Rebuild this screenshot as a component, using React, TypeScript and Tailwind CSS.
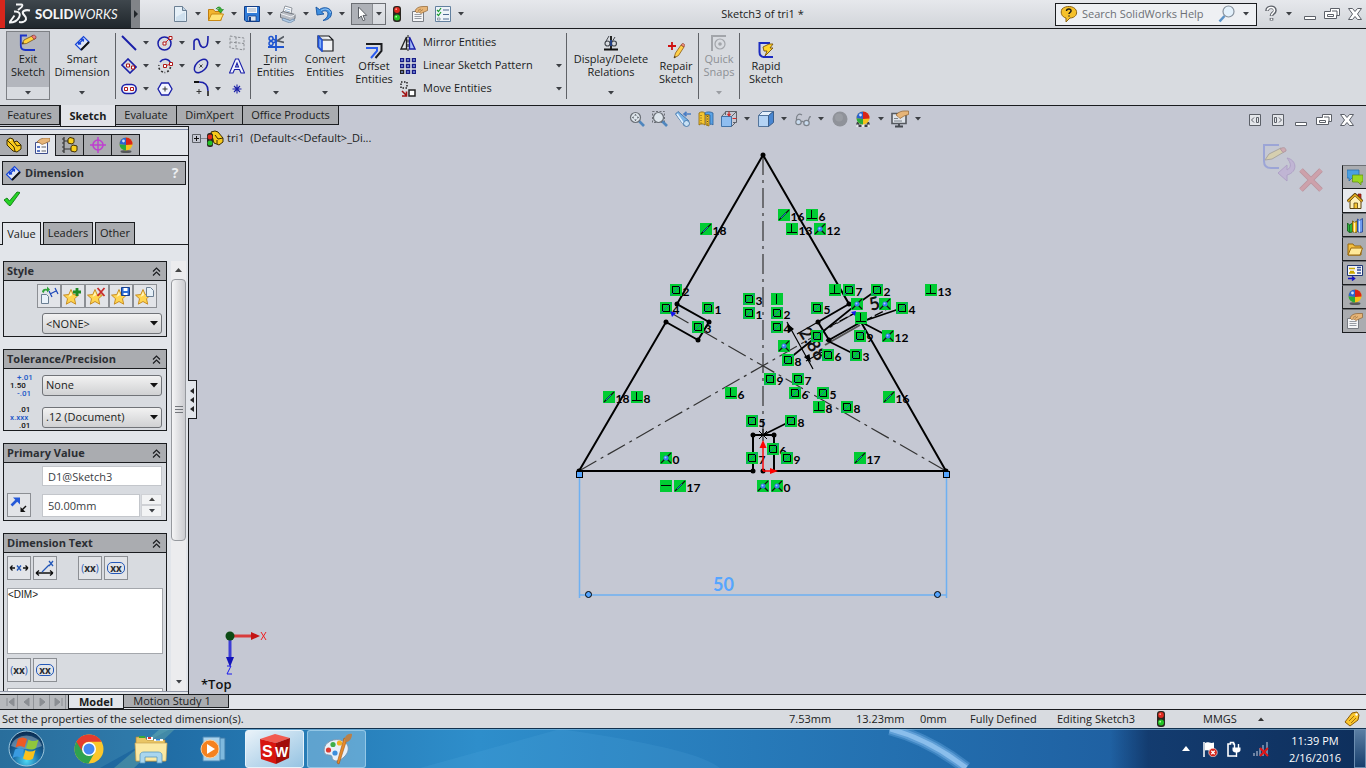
import type { ReactNode } from 'react';

const outline = '#1a1fa8';

function Icon({ size = 16, box = 16, children }: { size?: number; box?: number; children: ReactNode }) {
  return (
    <svg width={size} height={size} viewBox={`0 0 ${box} ${box}`} fill="none" className="shrink-0" aria-hidden="true">
      {children}
    </svg>
  );
}

function Caret({ color = '#3c3f44' }: { color?: string }) {
  return (
    <svg width="6" height="4" viewBox="0 0 6 4" className="shrink-0" aria-hidden="true">
      <path d="M0 0h6L3 3.500z" fill={color} />
    </svg>
  );
}

function DropArrow({ label, className = 'w-[18px]' }: { label: string; className?: string }) {
  return (
    <button type="button" aria-label={label} className={`${className} flex h-5 shrink-0 items-center justify-center`}>
      <Caret />
    </button>
  );
}

/* ---------- Icons ---------- */

const NewDoc = () => (
  <Icon size={18} box={18}>
    <path d="M3.500 1.500h8l4 4v11h-12z" fill="#e6f0f8" stroke="#6b7f93" />
    <path d="M11.500 1.500v4h4" fill="#c1d4e4" stroke="#6b7f93" />
    <path d="M5 12l9-5v9H5z" fill="#bfd6e8" opacity=".6" />
  </Icon>
);

const OpenDoc = () => (
  <Icon size={18} box={18}>
    <path d="M1.500 4.500h5l1.500 2h6v9h-12.500z" fill="#f2b52e" stroke="#c07c10" />
    <path d="M1.500 15.500l3-6.500h12l-3 6.500z" fill="#ffe375" stroke="#c98a14" />
    <path d="M9 4c2-3 5-2.500 5.500 0.500h2L13.500 8l-3-3.500h2C12 2.500 11 2.500 9 4z" fill="#38b432" stroke="#167d17" strokeWidth=".6" />
  </Icon>
);

const SaveDoc = () => (
  <Icon>
    <path d="M.500.500h15v15H2L.500 14z" fill="#2f7bd8" stroke="#123d86" />
    <path d="M3 1h10v6H3z" fill="#f4f7fb" />
    <path d="M4 3h8M4 5h8" stroke="#9dabbc" />
    <path d="M4 10h8v5H4z" fill="#dde5ef" stroke="#123d86" strokeWidth=".7" />
    <path d="M6 11v4" stroke="#123d86" strokeWidth="2" />
  </Icon>
);

const PrintDoc = () => (
  <Icon size={18} box={18}>
    <path d="M4 7l2-6 7 2-1 6z" fill="#fff" stroke="#8f959d" />
    <path d="M6.500 3.500l5 1.500M6 5.500l5 1.500" stroke="#8aa8c8" strokeWidth=".8" />
    <path d="M1.500 8l3-1.500 11.500 3v4l-4 2.500-10.500-3.500z" fill="#b9bdc4" stroke="#6f747c" />
    <path d="M1.500 8.500l10.500 3.500 4-2.500" stroke="#eef0f3" />
    <path d="M4 13l7 2.500 3-1.500 2 1-5 3-8-3z" fill="#aecbe8" stroke="#6d87a3" strokeWidth=".7" />
  </Icon>
);

const UndoIcon = () => (
  <Icon size={18} box={18}>
    <path d="M1 2l1 8 7-1-2.500-2C9 5 13 5.500 13 9c0 3-2.500 5-5 6.500 5-.5 8.500-3 8.500-7.500C16.500 3 9 1 4.500 4.500z" fill="#3f8fe0" stroke="#17549f" strokeWidth=".9" />
    <path d="M6 5.500C10 2.500 15 4.500 15.500 8" stroke="#a9d4fa" strokeWidth=".8" />
  </Icon>
);

const Pointer = () => (
  <Icon>
    <path d="M4.500 1v11.500l2.700-2.500 1.900 4.700 1.900-.8-2-4.500h3.700z" fill="#fff" stroke="#5d6167" />
  </Icon>
);

const TrafficLight = () => (
  <Icon size={16}>
    <rect x="4" y="0" width="8" height="16" rx="3" fill="#2a2620" />
    <circle cx="8" cy="4" r="2.900" fill="#e0291f" />
    <circle cx="8" cy="11.500" r="3" fill="#23c326" />
    <circle cx="7.200" cy="3.200" r=".9" fill="#ff9d90" />
    <circle cx="7.200" cy="10.700" r=".9" fill="#b0ffa5" />
  </Icon>
);

const PropsHand = () => (
  <Icon>
    <path d="M.500 5.500h11v10h-11z" fill="#f4f5f7" stroke="#787c83" />
    <path d="M2.500 8.500h7M2.500 10.500h7M2.500 12.500h7" stroke="#969ba3" />
    <path d="M3 5c1-3 4-4.500 8-4.500h4.500v4L12 6l-3 1.500L7 6 4.500 6.500z" fill="#e7b578" stroke="#8f6330" strokeWidth=".7" />
    <path d="M6 4.500l3-1.500M8 5.500l3-2" stroke="#8f6330" strokeWidth=".6" />
  </Icon>
);

const OptionList = () => (
  <Icon>
    <path d="M.500.500h15v15H.500z" fill="#eef3f9" stroke="#62809f" />
    <path d="M2 4l1.500 1.500L6 2M2 8l1.500 1.500L6 6" stroke="#1e9b30" strokeWidth="1.200" />
    <path d="M2.500 12h2.500v2H2.500z" stroke="#7c8896" strokeWidth=".8" />
    <path d="M8 4h6M8 8.500h6M8 13h6" stroke="#4e6a92" strokeWidth="1.200" />
  </Icon>
);

const PencilSketch = ({ size = 18 }: { size?: number }) => (
  <Icon size={size} box={18}>
    <path d="M8 1.500H1.800v10c0 3 2 4.500 4.500 4.500H16" stroke="#1b33c9" strokeWidth="1.800" />
    <path d="M3 10l2-4 9-4.500 2.500 3-9 5z" fill="#ffd23c" stroke="#6b4310" strokeWidth=".7" />
    <path d="M12.500 2.200l2.500 3 2-1c.4-1.800-.8-3.200-2.500-3z" fill="#ee7d7d" stroke="#7b2525" strokeWidth=".6" />
    <path d="M3 10l1-2 1.200 1.200z" fill="#222" />
  </Icon>
);

const SmartDim = () => (
  <Icon>
    <path d="M1.500 9.500l8-8L15 7l-8 8z" fill="#dfe6f6" stroke="#1746d8" strokeWidth="1.200" />
    <path d="M4 9.500l5.500-5.500M9.500 4l-.2 2.600M9.500 4l-2.600.2M4.500 9l.2-2.600M4.500 9l2.600-.2" stroke="#1746d8" strokeWidth="1.400" />
    <path d="M7 15l8-8" stroke="#111" strokeWidth="2" />
  </Icon>
);

const LineTool = () => (
  <Icon>
    <path d="M1 1l14 14" stroke={outline} strokeWidth="2" />
  </Icon>
);
const CircleTool = () => (
  <Icon>
    <circle cx="7.500" cy="8.500" r="6.500" stroke={outline} strokeWidth="1.500" />
    <path d="M7.500 8.500L13 3" stroke="#c22" />
    <path d="M6 7h3v3H6zM12 1.500h3v3h-3z" fill="#fff" stroke="#b01717" />
  </Icon>
);
const SplineTool = () => (
  <Icon>
    <path d="M1 15V7c0-3 4-4 5-1 1 6 4 8 7.500 5C15 9.500 15 5 15 1" stroke={outline} strokeWidth="1.600" />
  </Icon>
);
const PlaneTool = () => (
  <Icon>
    <path d="M1 1l6 1 8 1v12l-6-1-8-1zM7 2v12M1 7l14 1.500" stroke="#8b8e93" strokeDasharray="2.500 1.500" />
  </Icon>
);
const RectTool = () => (
  <Icon>
    <path d="M1 7l6-6 8 8-6 6z" stroke={outline} strokeWidth="1.600" />
    <path d="M5.500 6h3v3h-3zM10.500 8h3v3h-3z" fill="#fff" stroke="#b01717" />
  </Icon>
);
const ArcTool = () => (
  <Icon>
    <path d="M3 4c3-4 9-4 11 2" stroke={outline} strokeWidth="1.600" />
    <path d="M13.500 9c-.5 3-3 5.500-6 5.500M6 14c-3-1-5-4-4-7" stroke="#333" strokeWidth="1.600" strokeDasharray="2 2" />
    <path d="M8 8l5.500-2" stroke="#c22" />
    <path d="M6.500 6.500h3v3h-3zM12.500 4.500h3v3h-3z" fill="#fff" stroke="#b01717" />
  </Icon>
);
const EllipseTool = () => (
  <Icon>
    <ellipse cx="8" cy="8" rx="8" ry="5" transform="rotate(-45 8 8)" stroke={outline} strokeWidth="1.500" />
    <path d="M6.500 6.500l3 3M9.500 6.500l-3 3" stroke="#333" strokeWidth=".9" />
  </Icon>
);
const TextTool = () => (
  <Icon>
    <path d="M.500 15L6.500 1h3l6 14h-3.500l-1.500-3.500h-5L4 15zM6.500 9h3L8 5z" fill="#f3f5ff" stroke={outline} strokeWidth="1.100" />
  </Icon>
);
const SlotTool = () => (
  <Icon>
    <rect x=".8" y="3.500" width="14.400" height="9" rx="4.500" fill="#f3f5ff" stroke={outline} strokeWidth="1.600" />
    <path d="M3.500 6.500h3v3h-3zM9.500 6.500h3v3h-3z" fill="#fff" stroke="#b01717" />
  </Icon>
);
const PolygonTool = () => (
  <Icon>
    <path d="M4.500 2h7L15 8l-3.500 6h-7L1 8z" fill="#f3f5ff" stroke={outline} strokeWidth="1.300" />
    <path d="M8 5.500v5M5.500 8h5" stroke="#333" />
  </Icon>
);
const FilletTool = () => (
  <Icon>
    <path d="M1 1h5" stroke="#111" strokeWidth="2" />
    <path d="M6 1c6 0 9 3 9 9" stroke={outline} strokeWidth="1.500" />
    <path d="M15 10v5" stroke="#111" strokeWidth="1.500" />
    <path d="M6 8v5M3.500 10.500h5" stroke="#333" />
  </Icon>
);
const PointTool = () => (
  <Icon>
    <path d="M8 3.500v9M3.500 8h9M5 5l6 6M11 5l-6 6" stroke={outline} strokeWidth="1.100" />
  </Icon>
);

const TrimIcon = () => (
  <Icon>
    <path d="M8 0v16M0 12h16" stroke="#1f55d0" strokeWidth="1.800" />
    <path d="M8 6.500l8-5M8 5.500l8 2" stroke="#555b63" strokeWidth="1.800" />
    <circle cx="3" cy="3.500" r="2" stroke="#1f55d0" strokeWidth="1.500" />
    <circle cx="3" cy="8.500" r="2" stroke="#1f55d0" strokeWidth="1.500" />
    <path d="M5 4l4 2M5 8l4-2" stroke="#1f55d0" strokeWidth="1.500" />
  </Icon>
);
const ConvertIcon = () => (
  <Icon size={17} box={17}>
    <path d="M1 1h11l4 4v11H5l-4-4zM1 1l4 4h11" fill="#f1f2f4" stroke="#16181b" strokeWidth="1.200" />
    <path d="M5 5v11L1.500 12V1.500z" fill="#7fb0f8" stroke="#1f4fd8" strokeWidth="1.600" />
  </Icon>
);
const OffsetIcon = () => (
  <Icon size={17} box={17}>
    <path d="M0 2h15.500v7l-6 7" stroke="#1b1d20" strokeWidth="2" />
    <path d="M0 6h11v3l-6 7" stroke="#2a5cf0" strokeWidth="2" />
  </Icon>
);
const MirrorIcon = () => (
  <Icon>
    <path d="M6.500 2v12H1z" fill="#e2e4e8" stroke="#222" strokeWidth="1.300" />
    <path d="M9.500 2v12H15z" fill="#a6bdf8" stroke={outline} strokeWidth="1.300" />
    <path d="M8 0v16" stroke="#111" strokeDasharray="3 1.500" />
  </Icon>
);
const PatternIcon = () => (
  <Icon>
    {[0, 6, 12].map((x) =>
      [0, 6, 12].map((y) => (
        <rect key={`${x}-${y}`} x={x + 0.5} y={y + 0.5} width="3" height="3" fill="#8fa4ee" stroke={x === 0 && y === 12 ? '#222' : '#171c86'} strokeWidth="1.400" />
      )),
    )}
  </Icon>
);
const MoveIcon = () => (
  <Icon>
    <path d="M1 1h6v6H1z" stroke="#222" strokeWidth="1.500" strokeDasharray="1.500 1.500" />
    <path d="M9 9h6v6H9z" fill="#fff" stroke="#222" strokeWidth="1.500" />
    <path d="M2 10l4 4M6.500 10.500V15H2" stroke="#a11212" strokeWidth="1.600" />
  </Icon>
);
const RelationsIcon = () => (
  <Icon>
    <circle cx="4.500" cy="8.500" r="2.500" stroke="#44484f" strokeWidth="1.200" />
    <circle cx="11" cy="8.500" r="2.500" stroke="#44484f" strokeWidth="1.200" />
    <path d="M2.500 7L6 1M9 7l3-5" stroke="#44484f" />
    <path d="M8 1v13M1 14.500h14" stroke="#111" strokeWidth="1.800" />
    <path d="M8 5v6" stroke="#2b63e8" strokeWidth="1" />
  </Icon>
);
const RepairIcon = () => (
  <Icon size={18} box={18}>
    <path d="M5 1v8M1 5h8" stroke="#cf1010" strokeWidth="1.800" />
    <path d="M7 17l1.500-5L14 4l3 2-5.500 8.500z" fill="#ffd04a" stroke="#8b5a12" strokeWidth=".8" />
    <path d="M14 4l3 2 .8-1.500c0-1.500-1.500-2.200-2.500-2z" fill="#e98a7b" stroke="#8b3a22" strokeWidth=".6" />
    <path d="M7 17l.6-2 1.400 1z" fill="#222" />
  </Icon>
);
const SnapsIcon = () => (
  <Icon>
    <path d="M1 16V1h14" stroke="#a2a5aa" strokeWidth="2" />
    <circle cx="9" cy="9" r="5" stroke="#a2a5aa" strokeWidth="1.200" />
    <circle cx="9" cy="9" r="1.800" fill="#a2a5aa" />
  </Icon>
);
const RapidIcon = () => (
  <Icon>
    <path d="M12 1H1.500v9c0 3 2 5 5 5H15" stroke="#1b2bc0" strokeWidth="2" />
    <path d="M5 5l6-3h4l-3 4h3l-8 8 2-5H6z" fill="#ffd42b" stroke="#7c5208" strokeWidth=".9" />
  </Icon>
);

const ZoomFit = ({ area = false }: { area?: boolean }) => (
  <Icon>
    {area && <path d="M.500.500h12v11H.500z" stroke="#6d7178" strokeDasharray="2 1.500" />}
    <path d="M10 10l5 5" stroke="#4f86be" strokeWidth="2.600" />
    <circle cx="6.500" cy="6.500" r="5" fill="#e4ecf2" fillOpacity=".8" stroke="#6b7077" strokeWidth="1.200" />
    {!area && <path d="M6.500 3l1.300 1.600H5.200zM6.500 10l1.300-1.600H5.200zM3 6.500l1.600-1.300v2.600zM10 6.500L8.400 5.200v2.600z" fill="#444a52" />}
  </Icon>
);
const PrevView = () => (
  <Icon>
    <path d="M.500 3L3 .500l10.500 9L9.500 15z" fill="#7db4e6" stroke="#32689f" strokeWidth=".8" />
    <path d="M2 3l7 10" stroke="#e4f2ff" strokeWidth="1.600" />
    <ellipse cx="11.500" cy="12.500" rx="3" ry="3" fill="#c8e1f5" stroke="#32689f" strokeWidth=".8" />
    <path d="M16 3H9.500M11.500.8L9 3l2.500 2.200" stroke="#4a7dc4" strokeWidth="1.600" />
  </Icon>
);
const SectionView = () => (
  <Icon>
    <path d="M1 2c2-1.500 4-1.500 6 0v12c-2-1.500-4-1.500-6 0z" fill="#f5c531" stroke="#8a640a" strokeWidth=".8" />
    <path d="M7 2c1-1.500 6-1.500 8 0v12c-1-1-2-1-3-.5V4L7 3.500z" fill="#5ba3e6" stroke="#2a5f9a" strokeWidth=".8" />
    <path d="M11 4v11l-3-1V4z" fill="#f5c531" stroke="#8a640a" strokeWidth=".8" />
    <path d="M3 4v10M9.500 5v9" stroke="#6b5012" strokeDasharray="1 1.500" />
  </Icon>
);
const ViewOrient = () => (
  <Icon>
    <path d="M4.500 4V.500h11v11H12" stroke="#5d6168" />
    <path d="M.500 5.500h10v10H.500z" fill="#8fbef0" stroke="#4173a9" />
    <path d="M.500 5.500L5 .500M10.500 5.500l5-5M10.500 15.500l5-5" stroke="#5d6168" />
    <path d="M8 .500v4M6.500 3L8 4.800 9.500 3M15.500 7.500h-4" stroke="#cf2c2c" strokeWidth="1.200" />
  </Icon>
);
const CubeIcon = () => (
  <Icon>
    <path d="M.500 4.500h10v11H.500z" fill="#b4d3f4" stroke="#54759c" />
    <path d="M.500 4.500l4-4h11l-5 4z" fill="#e3effb" stroke="#54759c" />
    <path d="M10.500 4.500l5-4v11l-5 4z" fill="#4886d2" stroke="#3c5f8b" />
  </Icon>
);
const Glasses = () => (
  <Icon>
    <circle cx="3.500" cy="11" r="2.700" fill="#c9dcef" stroke="#7d838b" strokeWidth="1.200" />
    <circle cx="11.500" cy="12" r="2.700" fill="#c9dcef" stroke="#7d838b" strokeWidth="1.200" />
    <path d="M6 11c1-1 2-1 3 .5M1.500 9C1 4 4 2 7 4M13 10c2-4 1-5 3-4" stroke="#7d838b" strokeWidth="1.200" />
  </Icon>
);
const GreyBall = () => (
  <Icon>
    <circle cx="8" cy="8" r="7.500" fill="#8f9299" />
    <circle cx="7" cy="6.500" r="4" fill="#9a9da3" />
  </Icon>
);
const ColorBall = ({ base = false }: { base?: boolean }) => (
  <Icon>
    {base && (
      <>
        <path d="M1 16l2-5h10l2 5z" fill="#e6e8eb" />
        <path d="M2 11h3l-1 2.500H1zM11 11h3l1 2.500h-3zM3.500 13.500h3V16h-3zM9.500 13.500h3V16h-3z" fill="#3d4047" />
      </>
    )}
    {!base && <ellipse cx="8" cy="14.500" rx="5.500" ry="1.500" fill="#55585c" />}
    <circle cx="8" cy="7" r="6.500" fill="#f5c21b" />
    <path d="M8 .500A6.500 6.500 0 0 0 1.500 7.500L8 8z" fill="#2b63cf" />
    <path d="M8 .500A6.500 6.500 0 0 1 14.500 7.500L8 8z" fill="#d92418" />
    <path d="M1.500 7.500A6.500 6.500 0 0 0 8 13.500V8z" fill="#2bab3c" />
    <circle cx="5.500" cy="4" r="1.400" fill="#cfe2ff" />
  </Icon>
);
const ScreenHand = () => (
  <Icon size={18} box={18}>
    <path d="M1 3.500h14v10H1z" fill="#dfe4ea" stroke="#55595f" strokeWidth="1.600" />
    <path d="M4 16.500h8M8 14v2" stroke="#44484f" strokeWidth="1.800" />
    <path d="M5 5c2-3 6-4 8-4h4.500v3.500L13 6 9 8.500 7 6.500z" fill="#e7b578" stroke="#8f6330" strokeWidth=".7" />
    <path d="M3 8.500h4M3 11h8" stroke="#7c828a" />
  </Icon>
);

const PartIcon = () => (
  <Icon>
    <path d="M1 3l3-2 3 1 1 3 3-1 4 4v4l-4 3-4-1-6-6z" fill="#f7c91c" stroke="#3b2c04" strokeWidth="1" />
    <path d="M1 3l7 7 1 4M8 5l3 4 4-1" stroke="#3b2c04" strokeWidth="1" />
    <path d="M4 2l2 1-2 1z" fill="#fff3b0" />
  </Icon>
);
const PropertyIcon = () => (
  <Icon>
    <path d="M1.500 4.500h12v11h-12z" fill="#f8f8fb" stroke="#3d4d8c" />
    <path d="M3 8h3v2H3zM3 12h3v2H3z" fill="#5a77c4" />
    <path d="M7.500 9H12M7.500 13H12" stroke="#5d6168" />
    <path d="M3 4c2-3 6-4 8-4h5v3l-4 2-4 1.500L6 5z" fill="#e7b578" stroke="#8f6330" strokeWidth=".7" />
  </Icon>
);
const ConfigIcon = () => (
  <Icon>
    <path d="M2 0v16M2 4h5M2 12h7" stroke="#333" strokeWidth="1.200" />
    <path d="M0 2h2M0 6h2M0 10h2M0 14h2" stroke="#333" />
    <path d="M6 2l2-1.500 4 1v4l-2 1.500-4-1zM9 9.500L11 8l4 1v4.500L13 15l-4-1z" fill="#f9cf1d" stroke="#3b2c04" />
  </Icon>
);
const DimXpertIcon = () => (
  <Icon>
    <circle cx="8" cy="8" r="5" stroke="#bf3fd0" strokeWidth="1.600" />
    <path d="M8 0v16M0 8h16" stroke="#bf3fd0" strokeWidth="1.400" />
  </Icon>
);

function Star({ children }: { children: ReactNode }) {
  return (
    <Icon size={20} box={20}>
      <path d="M8 3.500l2.200 5 5.300.6-4 3.600 1.200 5.500L8 15.500l-4.700 2.700 1.200-5.500-4-3.600 5.300-.6z" fill="#ffd550" stroke="#c3861a" strokeWidth=".9" />
      <path d="M8 5.500l1.200 3.500-3.700 2z" fill="#fff4bd" />
      {children}
    </Icon>
  );
}
const DefaultStyle = () => (
  <Icon size={20} box={20}>
    <path d="M2.500 8.500h5l2 2v7h-7z" fill="#eaf2fa" stroke="#6b7f93" />
    <path d="M3 6c0-3 3-4 5-3V.500l3 3-3 3V5c-2-1-3 0-3 2z" fill="#2fa23a" />
    <path d="M11 8l6-3M10 5l3 6M16 2l3 6" stroke="#1b46b8" strokeWidth="1.200" />
  </Icon>
);

const Grip = () => (
  <svg width="8" height="9" viewBox="0 0 8 9" aria-hidden="true">
    <path d="M0 .500h8M0 3.500h8M0 6.500h8" stroke="#74777c" />
  </svg>
);

/* ---------- Title bar ---------- */

function Logo() {
  return (
    <div className="flex h-7 w-[140px] shrink-0">
      <div className="w-[5px] bg-[#d8261c]" />
      <div className="flex w-[126px] items-center gap-1 bg-linear-to-b from-[#3f474d] to-[#20272c] pl-1">
        <svg width="22" height="22" viewBox="0 0 22 22" fill="none" stroke="#f4f5f6" aria-hidden="true">
          <path d="M7 1.500h5.500c1.500 0 1 2.500-1 3.500L9 7" strokeWidth="1.900" />
          <path d="M5 8.500c5-.5 7 2 5 6-1.500 3-5 5-9.500 5l5-7" strokeWidth="1.900" />
          <path d="M21 7.500c-5-1-8 .5-7 3 .8 2 4 3 3 6-.7 2-4 3-7 2.500" strokeWidth="2.100" />
        </svg>
        <span className="font-['Lato',sans-serif] text-[13px] leading-4 text-[#f4f5f6]">
          <b className="font-black">SOLID</b>
          <i>WORKS</i>
        </span>
      </div>
      <button type="button" aria-label="Expand menu" className="flex w-[9px] items-center justify-center bg-[#818488]">
        <svg width="4" height="8" viewBox="0 0 4 8" aria-hidden="true">
          <path d="M0 0l4 4-4 4z" fill="#22262a" />
        </svg>
      </button>
    </div>
  );
}

const fileTools = [
  { label: 'New', icon: <NewDoc /> },
  { label: 'Open', icon: <OpenDoc /> },
  { label: 'Save', icon: <SaveDoc /> },
  { label: 'Print', icon: <PrintDoc /> },
  { label: 'Undo', icon: <UndoIcon /> },
];

function WindowButtons() {
  return (
    <>
      <button type="button" aria-label="Minimize" className="flex h-5 w-[23px] items-center justify-center">
        <Icon>
          <path d="M2.500 10.500h11v3h-11z" fill="#fff" stroke="#5c6068" />
        </Icon>
      </button>
      <button type="button" aria-label="Restore" className="flex h-5 w-[23px] items-center justify-center">
        <Icon>
          <path d="M6.500 2.500h9v7h-3v3h-12v-7h6z" fill="#fff" stroke="#5c6068" />
          <path d="M3.500 8.500h6v2h-6zM8 5h5v5" stroke="#5c6068" />
        </Icon>
      </button>
      <button type="button" aria-label="Close" className="flex h-5 w-[23px] items-center justify-center">
        <Icon>
          <path d="M1.500 2.500h4L8 5.500l2.500-3h4L10.500 8l4 5.500h-4L8 10.500l-2.500 3h-4l4-5.500z" fill="#fff" stroke="#5c6068" />
        </Icon>
      </button>
    </>
  );
}

function TitleBar() {
  return (
    <header className="flex h-[29px] items-center border-b border-[#1a1c1f] bg-linear-to-b from-[#e6e8ec] to-[#d2d5da]">
      <div className="flex w-[470px] shrink-0 items-center">
        <Logo />
        <div className="flex items-center pl-[31px]">
          {fileTools.map((tool) => (
            <div key={tool.label} className="flex items-center">
              <button type="button" aria-label={tool.label} className="flex w-[18px] justify-center">
                {tool.icon}
              </button>
              <DropArrow label={`${tool.label} options`} />
            </div>
          ))}
        </div>
        <div className="flex h-[22px] border border-[#6c6f74]">
          <button type="button" aria-label="Select" className="flex w-[21px] items-center justify-center border-r border-[#8a8d92] bg-[#aeb1b7]">
            <Pointer />
          </button>
          <DropArrow label="Select options" className="w-3" />
        </div>
        <button type="button" aria-label="Rebuild" className="ml-0.5 flex w-[18px] justify-center">
          <TrafficLight />
        </button>
        <button type="button" aria-label="File properties" className="ml-1 flex w-5 justify-center">
          <PropsHand />
        </button>
        <button type="button" aria-label="Options" className="ml-1 flex w-[18px] justify-center">
          <OptionList />
        </button>
        <DropArrow label="Options menu" />
      </div>
      <h1 className="flex-1 text-center text-[11px]">Sketch3 of tri1 *</h1>
      <div className="flex w-[311px] shrink-0 items-center">
        <div className="flex h-[23px] w-[202px] items-center border border-[#1a1c1f] bg-[#eef0f3] px-1">
          <Icon size={18} box={18}>
            <path d="M2 4c4-4 12-3 14 1s-1 8-6 8l-4 4v-4C2 12 0 8 2 4z" fill="#f5c12a" stroke="#8f6410" />
            <path d="M6.500 6c0-3 5-2.500 4.500 0 0 1.500-2 1.500-2 3M9 10.500v1" stroke="#1a1a1a" strokeWidth="1.500" />
          </Icon>
          <input
            aria-label="Search SolidWorks Help"
            placeholder="Search SolidWorks Help"
            className="ml-1 min-w-0 flex-1 bg-transparent text-[11px] outline-none placeholder:text-[#6c6f75]"
          />
          <button type="button" aria-label="Search">
            <Icon size={18} box={18}>
              <path d="M1.500 16.500l5-5.500" stroke="#5b93c8" strokeWidth="2.600" />
              <circle cx="10.500" cy="6.500" r="5.500" fill="#e4f1fb" stroke="#86919d" strokeWidth="1.200" />
            </Icon>
          </button>
          <DropArrow label="Search options" className="ml-1 w-3" />
        </div>
        <button type="button" aria-label="Help" className="ml-1 flex w-5 justify-center">
          <svg width="16" height="18" viewBox="0 0 16 18" fill="none" aria-hidden="true">
            <path d="M4 6c0-5 8-5 8-.5C12 8 8.500 8 8.500 11M8.500 13v2.500" stroke="#5c6068" strokeWidth="3.600" />
            <path d="M4.300 5.500c.5-4 7.200-4 7.200 0C11.500 8 8.500 8 8.500 10.500M8.500 13.500v1.500" stroke="#fff" strokeWidth="1.600" />
          </svg>
        </button>
        <DropArrow label="Help menu" className="mr-0.5 w-4" />
        <WindowButtons />
      </div>
    </header>
  );
}

/* ---------- Ribbon ---------- */

type BigButtonProps = {
  icon: ReactNode;
  lines: [ReactNode, string];
  className: string;
  low?: boolean;
  drop?: boolean;
  disabled?: boolean;
};

function BigButton({ icon, lines, className, low, drop, disabled }: BigButtonProps) {
  return (
    <button
      type="button"
      disabled={disabled}
      className={`${className} flex h-[70px] shrink-0 flex-col items-center text-[11px] leading-[13px] ${low ? 'pt-2.5' : 'pt-[3px]'} ${disabled ? 'text-[#8d9095]' : ''}`}
    >
      <span className="flex h-[18px] items-center">{icon}</span>
      <span className="whitespace-nowrap">{lines[0]}</span>
      <span className="whitespace-nowrap">{lines[1]}</span>
      {drop && (
        <span className="mt-auto pb-1.5">
          <Caret color={disabled ? '#9a9da2' : '#3c3f44'} />
        </span>
      )}
    </button>
  );
}

const Divider = ({ className = '' }: { className?: string }) => <div className={`${className} h-[66px] w-px shrink-0 bg-[#5f6267]`} />;

const sketchTools = [
  [
    { label: 'Line', icon: <LineTool />, drop: true },
    { label: 'Circle', icon: <CircleTool />, drop: true },
    { label: 'Spline', icon: <SplineTool />, drop: true },
    { label: 'Plane', icon: <PlaneTool />, drop: false },
  ],
  [
    { label: 'Rectangle', icon: <RectTool />, drop: true },
    { label: 'Arc', icon: <ArcTool />, drop: true },
    { label: 'Ellipse', icon: <EllipseTool />, drop: true },
    { label: 'Text', icon: <TextTool />, drop: false },
  ],
  [
    { label: 'Slot', icon: <SlotTool />, drop: true },
    { label: 'Polygon', icon: <PolygonTool />, drop: false },
    { label: 'Fillet', icon: <FilletTool />, drop: true },
    { label: 'Point', icon: <PointTool />, drop: false },
  ],
];

const editTools = [
  { label: 'Mirror Entities', icon: <MirrorIcon />, drop: false },
  { label: 'Linear Sketch Pattern', icon: <PatternIcon />, drop: true },
  { label: 'Move Entities', icon: <MoveIcon />, drop: true },
];

function Ribbon() {
  return (
    <section aria-label="Sketch commands" className="flex h-[77px] items-start border-b border-[#1a1c1f] bg-[#d8dbe0] pt-0.5 pl-1.5">
      <div className="flex h-[69px] w-11 shrink-0 flex-col border border-[#7d8085]">
        <button type="button" className="flex h-[55px] flex-col items-center bg-[#b3b6bd] pt-0.5 text-[11px] leading-[13px]">
          <span className="flex h-[18px] items-center">
            <PencilSketch />
          </span>
          <span>Exit</span>
          <span>Sketch</span>
        </button>
        <button type="button" aria-label="Exit Sketch options" className="flex flex-1 items-center justify-center">
          <Caret />
        </button>
      </div>
      <BigButton icon={<SmartDim />} lines={['Smart', 'Dimension']} className="w-16" drop />
      <Divider className="mt-0.5 ml-px" />
      <div className="ml-[3px] shrink-0">
        {sketchTools.map((row, i) => (
          <div key={i} className="flex h-[23px] items-center">
            {row.map((tool) => (
              <div key={tool.label} className="flex w-9 items-center last:w-5">
                <button type="button" aria-label={tool.label} className="flex w-5 justify-center">
                  {tool.icon}
                </button>
                {tool.drop && <DropArrow label={`${tool.label} options`} className="w-3.5" />}
              </div>
            ))}
          </div>
        ))}
      </div>
      <Divider className="mt-0.5 ml-[3px]" />
      <BigButton icon={<TrimIcon />} lines={[<><u>T</u>rim</>, 'Entities']} className="w-[49px]" drop />
      <BigButton icon={<ConvertIcon />} lines={['Convert', 'Entities']} className="w-[50px]" drop />
      <BigButton icon={<OffsetIcon />} lines={['Offset', 'Entities']} className="w-12" low />
      <div className="ml-0.5 w-[166px] shrink-0">
        {editTools.map((tool) => (
          <div key={tool.label} className="flex h-[23px] items-center">
            <button type="button" className="flex flex-1 items-center gap-[7px] text-[11px]">
              {tool.icon}
              {tool.label}
            </button>
            {tool.drop && <DropArrow label={`${tool.label} options`} className="w-3.5" />}
          </div>
        ))}
      </div>
      <Divider className="mt-0.5" />
      <BigButton icon={<RelationsIcon />} lines={['Display/Delete', 'Relations']} className="w-[88px]" drop />
      <BigButton icon={<RepairIcon />} lines={['Repair', 'Sketch']} className="w-[42px]" low />
      <Divider className="mt-0.5 ml-px" />
      <BigButton icon={<SnapsIcon />} lines={['Quick', 'Snaps']} className="w-10" drop disabled />
      <Divider className="mt-0.5" />
      <BigButton icon={<RapidIcon />} lines={['Rapid', 'Sketch']} className="w-[52px]" low />
    </section>
  );
}

/* ---------- Command tabs and view toolbar ---------- */

const commandTabs = [
  { label: 'Features', className: 'w-[60px]' },
  { label: 'Sketch', className: 'w-[56px]', active: true },
  { label: 'Evaluate', className: 'w-[61px]' },
  { label: 'DimXpert', className: 'w-[66px]' },
  { label: 'Office Products', className: 'w-[96px]' },
];

const viewTools = [
  { label: 'Zoom to Fit', icon: <ZoomFit />, drop: false },
  { label: 'Zoom to Area', icon: <ZoomFit area />, drop: false },
  { label: 'Previous View', icon: <PrevView />, drop: false },
  { label: 'Section View', icon: <SectionView />, drop: false },
  { label: 'View Orientation', icon: <ViewOrient />, drop: true },
  { label: 'Display Style', icon: <CubeIcon />, drop: true },
  { label: 'Hide/Show Items', icon: <Glasses />, drop: true },
  { label: 'Edit Appearance', icon: <GreyBall />, drop: false },
  { label: 'Apply Scene', icon: <ColorBall base />, drop: true },
  { label: 'View Settings', icon: <ScreenHand />, drop: true },
];

function TabStrip() {
  return (
    <div className="z-10 flex h-5 items-start">
      <nav className="flex w-[339px] shrink-0 items-start" aria-label="Command tabs">
        {commandTabs.map((tab) => (
          <button
            key={tab.label}
            type="button"
            className={`${tab.className} text-[11px] leading-4 ${
              tab.active
                ? '-mt-px h-[22px] border-x border-b border-[#1a1c1f] bg-[#e2e4e9] font-bold'
                : 'h-[19px] border-r border-b border-[#1a1c1f] bg-[#aaacb0]'
            }`}
          >
            {tab.label}
          </button>
        ))}
      </nav>
      <div className="flex h-[26px] flex-1 items-center justify-center pr-8">
        {viewTools.map((tool) => (
          <div key={tool.label} className="flex items-center">
            <button type="button" aria-label={tool.label} className="flex w-[23px] justify-center">
              {tool.icon}
            </button>
            {tool.drop && <DropArrow label={`${tool.label} options`} className="w-3.5" />}
          </div>
        ))}
      </div>
      <div className="flex h-[27px] w-[123px] shrink-0 items-center">
        <button type="button" aria-label="Dock left" className="flex w-[23px] justify-center">
          <Icon>
            <path d="M2.500 2.500h11v11h-11z" fill="#e4e6ea" stroke="#5c6068" />
            <path d="M7 5.500L4.500 8 7 10.500M9.500 5.500h2v5h-2z" stroke="#5c6068" />
          </Icon>
        </button>
        <button type="button" aria-label="Dock right" className="flex w-[23px] justify-center">
          <Icon>
            <path d="M2.500 2.500h11v11h-11z" fill="#e4e6ea" stroke="#5c6068" />
            <path d="M9 5.500L11.500 8 9 10.500M4.500 5.500h2v5h-2z" stroke="#5c6068" />
          </Icon>
        </button>
        <WindowButtons />
      </div>
    </div>
  );
}

/* ---------- Property manager ---------- */

const managerTabs = [
  { label: 'Feature tree', icon: <PartIcon /> },
  { label: 'Property manager', icon: <PropertyIcon />, active: true },
  { label: 'Configurations', icon: <ConfigIcon /> },
  { label: 'DimXpert manager', icon: <DimXpertIcon /> },
  { label: 'Display manager', icon: <ColorBall /> },
];

function Group({ title, children }: { title: string; children: ReactNode }) {
  return (
    <section className="border border-[#1a1c1f] bg-[#d8dbe0]">
      <h3 className="flex h-[19px] items-center justify-between border-b border-[#1a1c1f] bg-[#aaacb0] px-[3px]">
        <span className="text-[11px] font-bold text-[#2b2e33]">{title}</span>
        <button type="button" aria-label={`Collapse ${title}`} className="pr-0.5">
          <svg width="9" height="9" viewBox="0 0 9 9" fill="none" stroke="#1a1c1f" strokeWidth="1.200" aria-hidden="true">
            <path d="M1 4.500L4.500 1 8 4.500M1 8.500L4.500 5 8 8.500" />
          </svg>
        </button>
      </h3>
      {children}
    </section>
  );
}

function Dropdown({ label, options }: { label: string; options: string[] }) {
  return (
    <div className="relative w-[120px]">
      <select
        aria-label={label}
        className="block h-[21px] w-full appearance-none rounded-[3px] border border-[#707378] bg-linear-to-b from-[#f2f2f2] to-[#d0d1d3] pl-[3px] text-[11px] leading-4"
      >
        {options.map((option) => (
          <option key={option}>{option}</option>
        ))}
      </select>
      <svg width="8" height="5" viewBox="0 0 8 5" className="pointer-events-none absolute top-2 right-1" aria-hidden="true">
        <path d="M0 0h8L4 4.500z" fill="#111" />
      </svg>
    </div>
  );
}

function ToolButton({ label, children }: { label: string; children: ReactNode }) {
  return (
    <button type="button" aria-label={label} className="flex h-6 w-6 items-center justify-center border border-[#8c8f94] bg-[#e2e4e8] text-[11px] font-bold text-[#2b2e33]">
      {children}
    </button>
  );
}

const styleTools = [
  { label: 'Apply default attributes', icon: <DefaultStyle /> },
  {
    label: 'Add style',
    icon: (
      <Star>
        <path d="M14 2v8M10 6h8" stroke="#1f8a26" strokeWidth="2.800" />
      </Star>
    ),
  },
  {
    label: 'Delete style',
    icon: (
      <Star>
        <path d="M10.500 2l7 8M17.500 2l-7 8" stroke="#c92c2c" strokeWidth="1.800" />
      </Star>
    ),
  },
  {
    label: 'Save style',
    icon: (
      <Star>
        <path d="M10.500 1.500h8v8h-8z" fill="#2f6fd8" stroke="#163f8e" />
        <path d="M12.500 2h4v3h-4zM12.500 7h4v2h-4z" fill="#fff" />
      </Star>
    ),
  },
  {
    label: 'Load style',
    icon: (
      <Star>
        <path d="M11.500 1.500h4l3 3v6h-7z" fill="#e6f0f8" stroke="#6b7f93" />
      </Star>
    ),
  },
];

const ParenMark = ({ round = false }: { round?: boolean }) => (
  <span className={round ? 'rounded-[5px] border border-[#2458b8] px-0.5 text-[10px] leading-[10px]' : 'text-[10px] leading-3'}>
    {round ? 'xx' : <><span className="font-normal text-[#2458b8]">(</span>xx<span className="font-normal text-[#2458b8]">)</span></>}
  </span>
);

function PropertyManager() {
  return (
    <aside className="relative flex w-[189px] shrink-0 flex-col border-t border-r border-[#1a1c1f] bg-[#e2e5ea]">
      <div className="mt-0.5 h-px shrink-0 bg-[#7f8cab]" />
      <div className="mt-1 flex h-[22px] shrink-0 items-end border-b border-[#1a1c1f]" role="tablist">
        {managerTabs.map((tab) => (
          <button
            key={tab.label}
            type="button"
            role="tab"
            aria-label={tab.label}
            aria-selected={!!tab.active}
            className={`flex w-7 items-center justify-center border-t border-r border-[#1a1c1f] ${tab.active ? '-mb-px h-[22px] bg-[#e2e5ea]' : 'h-[21px] bg-[#aaacb0]'}`}
          >
            {tab.icon}
          </button>
        ))}
      </div>
      <div className="mx-0.5 mt-[5px] flex h-6 shrink-0 items-center border border-[#1a1c1f] bg-[#aaacb0] px-0.5">
        <SmartDim />
        <h2 className="ml-1 flex-1 text-[11px] font-bold text-[#2b2e33]">Dimension</h2>
        <button type="button" aria-label="Help on Dimension" className="w-4 text-[14px] leading-4 font-bold text-[#eceef1]">
          ?
        </button>
      </div>
      <button type="button" aria-label="OK" className="mt-1.5 ml-1 h-4 w-4 shrink-0">
        <Icon>
          <path d="M0 9l3-2 2.500 3L13 1l3 .5-9.500 13H5z" fill="#25d325" stroke="#0e7d12" strokeWidth=".9" />
        </Icon>
      </button>
      <div className="mt-[15px] flex h-[23px] shrink-0 items-end gap-0.5 border-b border-[#1a1c1f] pl-0.5 text-[11px]" role="tablist">
        <button type="button" role="tab" aria-selected="true" className="-mb-px h-[23px] w-[39px] border-x border-t border-[#1a1c1f] bg-[#e2e5ea]">
          Value
        </button>
        <button type="button" role="tab" aria-selected="false" className="h-[22px] w-[50px] border-x border-t border-[#1a1c1f] bg-[#aaacb0]">
          Leaders
        </button>
        <button type="button" role="tab" aria-selected="false" className="h-[22px] w-10 border-x border-t border-[#1a1c1f] bg-[#aaacb0]">
          Other
        </button>
      </div>
      <div className="mt-4 mb-0.5 flex min-h-0 flex-1 border-b border-[#8f95a5]">
        <div className="ml-[3px] flex w-[164px] shrink-0 flex-col gap-3 overflow-hidden">
          <Group title="Style">
            <div className="flex justify-end pt-[3px] pr-[9px]">
              {styleTools.map((tool) => (
                <ToolButton key={tool.label} label={tool.label}>
                  {tool.icon}
                </ToolButton>
              ))}
            </div>
            <div className="flex justify-end pt-[5px] pr-1 pb-0.5">
              <Dropdown label="Style" options={['<NONE>']} />
            </div>
          </Group>

          <Group title="Tolerance/Precision">
            <div className="flex items-center justify-between pt-1 pr-1 pl-1.5">
              <svg width="22" height="24" viewBox="0 0 22 24" className="font-['Roboto',sans-serif] text-[8px] font-medium" aria-hidden="true">
                <text x="7" y="7" fill="#1c58c8">+.01</text>
                <text x="0" y="15" fill="#111">1.50</text>
                <text x="7" y="23" fill="#1c58c8">-.01</text>
              </svg>
              <Dropdown label="Tolerance type" options={['None']} />
            </div>
            <div className="flex items-center justify-between pt-2 pr-1 pb-px pl-1.5">
              <svg width="22" height="24" viewBox="0 0 22 24" className="font-['Roboto',sans-serif] text-[8px] font-medium" aria-hidden="true">
                <text x="9" y="7" fill="#111">.01</text>
                <text x="0" y="15" fill="#1c58c8">x.xxx</text>
                <text x="9" y="23" fill="#111">.01</text>
              </svg>
              <Dropdown label="Unit precision" options={['.12 (Document)']} />
            </div>
          </Group>

          <Group title="Primary Value">
            <div className="flex justify-end pt-[3px] pr-1">
              <input aria-label="Name" defaultValue="D1@Sketch3" className="h-5 w-[120px] border border-[#c3c6cb] bg-white pl-[5px] text-[11px] text-[#3a3d44]" />
            </div>
            <div className="flex items-center pt-[7px] pr-1 pb-[3px] pl-[3px]">
              <ToolButton label="Reverse sense">
                <Icon size={18} box={18}>
                  <path d="M1.500 9.500L7 4" stroke="#2458d8" strokeWidth="2.600" />
                  <path d="M3 1.500h7v7z" fill="#2458d8" />
                  <path d="M16 10l-4 4" stroke="#111" strokeWidth="1.400" />
                  <path d="M10.500 11v5h5z" fill="#111" />
                </Icon>
              </ToolButton>
              <input aria-label="Dimension value" defaultValue="50.00mm" className="ml-[11px] h-[23px] w-[98px] border border-[#c3c6cb] bg-white pl-[5px] text-[11px] text-[#3a3d44]" />
              <div className="ml-px flex h-[23px] flex-1 flex-col">
                <button type="button" aria-label="Increase" className="flex flex-1 items-center justify-center border border-[#cfd1d5] bg-[#f2f3f4]">
                  <svg width="6" height="4" viewBox="0 0 6 4" aria-hidden="true"><path d="M0 4h6L3 .5z" fill="#444" /></svg>
                </button>
                <button type="button" aria-label="Decrease" className="flex flex-1 items-center justify-center border border-[#cfd1d5] bg-[#f2f3f4]">
                  <Caret />
                </button>
              </div>
            </div>
          </Group>

          <Group title="Dimension Text">
            <div className="flex gap-0.5 pt-[3px] pl-[3px]">
              <ToolButton label="Center dimension">
                <Icon size={20} box={20}>
                  <path d="M1 10h5M1 10l2.500-2.500M1 10l2.500 2.500M19 10h-5M19 10l-2.500-2.500M19 10l-2.500 2.500" stroke="#111" strokeWidth="1.300" />
                  <path d="M8 7.500l4 5M12 7.500l-4 5" stroke="#2458b8" strokeWidth="1.400" />
                </Icon>
              </ToolButton>
              <ToolButton label="Offset text">
                <Icon size={20} box={20}>
                  <path d="M1 15h17M1 15l3-2.500M1 15l3 2.500M18 15l-3-2.500M18 15l-3 2.500" stroke="#111" strokeWidth="1.300" />
                  <path d="M7 14l7-7M14 3l4 5M18 3l-4 5" stroke="#2458b8" strokeWidth="1.300" />
                </Icon>
              </ToolButton>
              <div className="w-[17px]" />
              <ToolButton label="Add parentheses"><ParenMark /></ToolButton>
              <ToolButton label="Inspection dimension"><ParenMark round /></ToolButton>
            </div>
            <div className="px-[3px] pt-2">
              <textarea aria-label="Dimension text" defaultValue="<DIM>" className="block h-[66px] w-full resize-none border border-[#a4a7ac] bg-white font-['Liberation_Sans',sans-serif] text-[10px] leading-3" />
            </div>
            <div className="flex gap-0.5 pt-1 pl-[3px]">
              <ToolButton label="Add parentheses to all"><ParenMark /></ToolButton>
              <ToolButton label="Inspection dimension for all"><ParenMark round /></ToolButton>
            </div>
            <div className="px-[3px] pt-1.5">
              <textarea aria-label="Text below dimension" className="block h-[66px] w-full resize-none border border-[#a4a7ac] bg-white text-[10px]" />
            </div>
          </Group>
        </div>
        <div className="ml-1 flex w-[15px] flex-col items-center bg-[#ececee]">
          <button type="button" aria-label="Scroll up" className="flex h-[18px] w-full shrink-0 items-center justify-center">
            <svg width="7" height="4" viewBox="0 0 7 4" aria-hidden="true"><path d="M0 4h7L3.500 0z" fill="#444" /></svg>
          </button>
          <div className="flex h-[61%] w-full items-center justify-center rounded-sm border border-[#96999e] bg-linear-to-r from-[#f5f5f6] to-[#cbccd0]">
            <Grip />
          </div>
          <button type="button" aria-label="Scroll down" className="mt-auto flex h-[18px] w-full shrink-0 items-center justify-center">
            <Caret />
          </button>
        </div>
      </div>
      <button
        type="button"
        aria-label="Collapse panel"
        className="absolute top-[253px] -right-[9px] z-10 flex h-[39px] w-[9px] flex-col items-center justify-center gap-[3px] border border-l-0 border-[#1a1c1f] bg-[#e2e5ea]"
      >
        {[0, 1, 2].map((i) => (
          <svg key={i} width="4" height="6" viewBox="0 0 4 6" aria-hidden="true">
            <path d="M4 0v6L0 3z" fill="#222" />
          </svg>
        ))}
      </button>
    </aside>
  );
}

/* ---------- Sketch drawing ---------- */

type Relation = { kind: 'box' | 'slash' | 'perp' | 'mid' | 'horiz' | 'vert'; x: number; y: number; n?: string };

const relations: Relation[] = [
  { kind: 'slash', x: 706, y: 229, n: '18' },
  { kind: 'slash', x: 784, y: 215, n: '16' },
  { kind: 'perp', x: 812, y: 215, n: '6' },
  { kind: 'perp', x: 792, y: 229, n: '13' },
  { kind: 'mid', x: 820, y: 229, n: '12' },
  { kind: 'box', x: 676, y: 290, n: '2' },
  { kind: 'box', x: 666, y: 308, n: '4' },
  { kind: 'box', x: 708, y: 308, n: '1' },
  { kind: 'box', x: 698, y: 327, n: '3' },
  { kind: 'box', x: 749, y: 299, n: '3' },
  { kind: 'box', x: 749, y: 313, n: '1' },
  { kind: 'vert', x: 777, y: 299 },
  { kind: 'box', x: 777, y: 313, n: '2' },
  { kind: 'box', x: 777, y: 327, n: '4' },
  { kind: 'mid', x: 784, y: 346 },
  { kind: 'box', x: 788, y: 360, n: '8' },
  { kind: 'box', x: 817, y: 308, n: '5' },
  { kind: 'perp', x: 835, y: 290 },
  { kind: 'box', x: 849, y: 290, n: '7' },
  { kind: 'box', x: 877, y: 290, n: '2' },
  { kind: 'perp', x: 931, y: 290, n: '13' },
  { kind: 'mid', x: 857, y: 304 },
  { kind: 'mid', x: 885, y: 304 },
  { kind: 'box', x: 902, y: 308, n: '4' },
  { kind: 'perp', x: 861, y: 318 },
  { kind: 'box', x: 817, y: 336 },
  { kind: 'box', x: 860, y: 336, n: '9' },
  { kind: 'mid', x: 888, y: 336, n: '12' },
  { kind: 'box', x: 828, y: 355, n: '6' },
  { kind: 'box', x: 856, y: 355, n: '3' },
  { kind: 'box', x: 770, y: 379, n: '9' },
  { kind: 'box', x: 798, y: 379, n: '7' },
  { kind: 'box', x: 795, y: 393, n: '6' },
  { kind: 'box', x: 823, y: 393, n: '5' },
  { kind: 'perp', x: 819, y: 407, n: '8' },
  { kind: 'box', x: 847, y: 407, n: '8' },
  { kind: 'slash', x: 889, y: 397, n: '16' },
  { kind: 'slash', x: 609, y: 397, n: '18' },
  { kind: 'perp', x: 637, y: 397, n: '8' },
  { kind: 'perp', x: 731, y: 393, n: '6' },
  { kind: 'box', x: 752, y: 421, n: '5' },
  { kind: 'box', x: 791, y: 421, n: '8' },
  { kind: 'box', x: 773, y: 449, n: '6' },
  { kind: 'box', x: 752, y: 458, n: '7' },
  { kind: 'box', x: 787, y: 458, n: '9' },
  { kind: 'mid', x: 666, y: 458, n: '0' },
  { kind: 'slash', x: 860, y: 458, n: '17' },
  { kind: 'horiz', x: 666, y: 486 },
  { kind: 'slash', x: 680, y: 486, n: '17' },
  { kind: 'mid', x: 763, y: 486 },
  { kind: 'mid', x: 777, y: 486, n: '0' },
];

function RelationMark({ kind, x, y, n }: Relation) {
  return (
    <g transform={`translate(${x} ${y})`}>
      <rect x="-6" y="-6" width="12" height="12" fill="#00cc33" />
      {kind === 'box' && (
        <>
          <rect x="-3.500" y="-3.500" width="7" height="7" fill="none" stroke="#000" strokeWidth="1" />
          <path d="M-5.500 5.500l11-11" stroke="#1d6fb0" strokeWidth=".9" />
        </>
      )}
      {kind === 'slash' && (
        <>
          <path d="M-5 5L5-5" stroke="#111" strokeWidth="1.200" />
          <path d="M-3 3l5-5" stroke="#1d5fd0" />
        </>
      )}
      {kind === 'perp' && <path d="M-.500-5v8M-5 3.500H5" stroke="#000" strokeWidth="1" />}
      {kind === 'mid' && (
        <>
          <path d="M-5 5L5-5M5 5L1 1" stroke="#111" strokeWidth="1.200" />
          <circle r="2.500" fill="#3a78f0" />
          <circle cx="-.5" cy="-.5" r="1" fill="#a9ccff" />
        </>
      )}
      {kind === 'horiz' && <path d="M-5-.500H5" stroke="#000" strokeWidth="1" />}
      {kind === 'vert' && <path d="M-.500-5V5" stroke="#000" strokeWidth="1" />}
      {n && (
        <text x="6.500" y="6" className="font-['Lato',sans-serif] text-[12px] font-bold" fill="#000">
          {n}
        </text>
      )}
    </g>
  );
}

const sketchPoints = [
  [763, 155], [677, 304], [709, 322], [698, 340], [666, 322], [579, 471], [753, 471], [753, 435],
  [774, 435], [763, 471], [946, 471], [849, 304], [818, 322], [829, 340],
];

function SketchDrawing() {
  return (
    <svg className="absolute inset-0 h-full w-full" viewBox="189 126 1177 568" fill="none" role="img" aria-label="Triangle sketch">
      <g stroke="#333" strokeWidth="1.200" strokeDasharray="20 5 3 5">
        <path d="M763 155v280" />
        <path d="M579 471l276-158" />
        <path d="M946 471L671 313" />
      </g>
      <g stroke="#000" strokeWidth="2">
        <path d="M763 155l-86 149 32 18-11 18-32-18-87 149h174v-36h21v36h172l-85-149-32 18-11-18 31-18z" />
      </g>
      <path d="M825 345l35-20" stroke="#555" strokeWidth="2" />
      {/* 2.88 and 5 slot dimensions */}
      <g stroke="#000" strokeWidth="1.200">
        <path d="M787 322l26 47M797 334l21-12M806 361l20-11" />
        <path d="M788 325l1 7 4-3zM810 361l-5-4 4-2z" fill="#000" />
        <path d="M829 327l26-14M864 321l22-11" strokeDasharray="9 3" />
      </g>
      <g className="font-['Lato',sans-serif] text-[18px] font-bold" fill="#111">
        <text transform="translate(798 332) rotate(58)">2.88</text>
        <text transform="translate(871 311) rotate(-15)">5</text>
      </g>
      <path d="M790 358l67-54 20-14M861 322l41-14M861 322l27 14M826 340l30 15M763 435l28-14" stroke="#000" strokeWidth="1.700" />
      {sketchPoints.map(([x, y]) => (
        <circle key={`${x}-${y}`} cx={x} cy={y} r="2.500" fill="#000" />
      ))}
      <path d="M757 435h12M763 429v12M759 431l8 8M767 431l-8 8" stroke="#000" />
      {relations.map((relation) => (
        <RelationMark key={`${relation.x}-${relation.y}`} {...relation} />
      ))}
      <path d="M670 311l6 2-4 4zM851 312l5-1-1 5z" fill="#1414f0" />
      {/* Sketch origin */}
      <path d="M763 471v-24M763 471h10" stroke="#f00" strokeWidth="1.400" />
      <path d="M759.500 448l3.500-8 3.500 8zM770 468v6l8-3z" fill="#f00" />
      {/* Selected dimension */}
      <g stroke="#6eb0f2" strokeWidth="1.500">
        <path d="M579.500 476v122M946.500 476v122M579 595h368" />
      </g>
      <g fill="#55a5ff" stroke="#000">
        <rect x="576.500" y="471.500" width="6" height="6" />
        <rect x="943.500" y="471.500" width="6" height="6" />
        <circle cx="588.500" cy="594.500" r="3" />
        <circle cx="937.500" cy="594.500" r="3" />
      </g>
      <text x="713" y="591" className="font-['Lato',sans-serif] text-[18px] font-bold" fill="#55a5ff">
        50
      </text>
      {/* View triad */}
      <path d="M234 636h18" stroke="#d83c3c" strokeWidth="3" />
      <path d="M251 632l9 4-9 4z" fill="#c41414" />
      <path d="M230 640v18" stroke="#3d3dd6" strokeWidth="3" />
      <path d="M226 657h8l-4 10z" fill="#1414b8" />
      <circle cx="230" cy="636" r="4.500" fill="#0c4a14" />
      <path d="M261 632l5 8M266 632l-5 8" stroke="#f02020" />
      <path d="M227 666h4l-4 8h5" stroke="#1818f0" />
      <text x="201" y="689" className="font-['Open_Sans',sans-serif] text-[13px] font-semibold" fill="#111">
        *Top
      </text>
    </svg>
  );
}

const taskTabs = [
  {
    label: 'Forum',
    icon: (
      <Icon>
        <path d="M0 1h12v8H5l-3 3V9H0z" fill="#4a9fe0" stroke="#2468a4" strokeWidth=".7" />
        <path d="M5.500 6H16v7h-2v3l-3-3H5.500z" fill="#9bd822" stroke="#5a8d0a" strokeWidth=".7" />
      </Icon>
    ),
  },
  {
    label: 'Resources',
    active: true,
    icon: (
      <Icon>
        <path d="M11 1h3v6h-3z" fill="#c22d1a" stroke="#701508" strokeWidth=".7" />
        <path d="M3 8v7.500h11V8L8.500 2.500z" fill="#fff0b5" stroke="#5b4310" />
        <path d="M.500 8.500L8 1.500l7.500 7" stroke="#5b4310" strokeWidth="3" />
        <path d="M1 8.300L8 1.800l7 6.500" stroke="#e0a91e" strokeWidth="1.600" />
        <path d="M7 10h3.500v5.500H7z" fill="#f7c531" stroke="#5b4310" strokeWidth=".8" />
      </Icon>
    ),
  },
  {
    label: 'Design library',
    icon: (
      <Icon>
        <path d="M.500 6l2 2 3-2v9l-3 .5-2-1.500z" fill="#2eb43c" stroke="#0c5414" strokeWidth=".8" />
        <path d="M2.500 8v7.500M5.500 4l2 1.500L10 4v11l-2.500.5-2-1.500z" stroke="#0c5414" strokeWidth=".6" />
        <path d="M5.500 4l2 1.500L10 4v11l-2.500.5-2-1z" fill="#f5c52c" stroke="#7d5a08" strokeWidth=".8" />
        <path d="M10.500 2l2 1.500 3-2V15l-3 .5-2-1z" fill="#6f9cf0" stroke="#1f3f94" strokeWidth=".8" />
        <path d="M7.500 5.500v10M12.500 3.500v12" stroke="#fff" strokeWidth=".7" />
      </Icon>
    ),
  },
  {
    label: 'File explorer',
    icon: (
      <Icon>
        <path d="M1 3h5l1.500 2H14v9H1z" fill="#f5c040" stroke="#99680d" />
        <path d="M1 14l3-7h11.500l-2.500 7z" fill="#ffe99a" stroke="#99680d" />
      </Icon>
    ),
  },
  {
    label: 'View palette',
    icon: (
      <Icon>
        <path d="M.500.500h15v10H.500z" fill="#f4f5f7" stroke="#1f3573" />
        <path d="M2 3.500h6M2 8h6M3 6.500h4" stroke="#c9a800" strokeWidth="1.600" />
        <path d="M10 2.500h4M10 5h4M10 8h4" stroke="#324f9c" strokeWidth="1.600" />
        <path d="M1 13.500h6M5 11.500l2.500 2L5 15.500" stroke="#1414c4" strokeWidth="1.500" />
      </Icon>
    ),
  },
  { label: 'Appearances', icon: <ColorBall /> },
  { label: 'Custom properties', icon: <PropsHand /> },
];

function GraphicsArea() {
  return (
    <main className="relative flex min-w-0 flex-1 items-start justify-between overflow-hidden">
      <SketchDrawing />
      <div className="relative flex h-6 items-center pl-[3px] text-[11px]">
        <button type="button" aria-label="Expand tree">
          <svg width="9" height="9" viewBox="0 0 9 9" fill="none" aria-hidden="true">
            <path d="M.500.500h8v8h-8z" stroke="#5d6067" />
            <path d="M2 4.500h5M4.500 2v5" stroke="#111" />
          </svg>
        </button>
        <span className="h-px w-1.5 bg-[#85888f]" />
        <svg width="17" height="17" viewBox="0 0 17 17" fill="none" aria-hidden="true">
          <path d="M4 2l4-1 3 1 5 6v4l-4 3-5-2z" fill="#f7c91c" stroke="#3b2c04" />
          <path d="M8 5l3 4 5-1M10 10v4" stroke="#3b2c04" />
          <rect x="0" y="3" width="6" height="14" rx="2.500" fill="#2a2620" />
          <circle cx="3" cy="7" r="2.400" fill="#e0291f" />
          <circle cx="3" cy="13" r="2.500" fill="#23c326" />
        </svg>
        <span className="ml-[3px] whitespace-pre">tri1  (Default&lt;&lt;Default&gt;_Di...</span>
      </div>
      <div className="relative flex items-start">
        <div className="flex pt-2 opacity-30">
          <button type="button" aria-label="Save and exit sketch" className="-mr-0.5">
            <svg width="40" height="40" viewBox="0 0 40 40" fill="none" aria-hidden="true">
              <path d="M18 2H3v16c0 5 3 7 7 7h8" stroke="#3f56e0" strokeWidth="2" />
              <path d="M4 17l4-6 12-6 3 4-12 7z" fill="#ffdf5e" stroke="#6b5a2c" />
              <path d="M19 5.500l3 4 3-1.500c0-3-2-4-4-3z" fill="#e36a6a" stroke="#8a3030" />
              <path d="M26 15c10 2 11 14 0 17v6l-9-8 9-8v5c5-3 4-7 0-12z" fill="#b78ad8" stroke="#7d49a8" />
            </svg>
          </button>
          <button type="button" aria-label="Cancel sketch" className="mt-[34px]">
            <svg width="24" height="24" viewBox="0 0 24 24" fill="none" aria-hidden="true">
              <path d="M2 2l20 20M22 2L2 22" stroke="#a02026" strokeWidth="5" />
              <path d="M2 2l20 20M22 2L2 22" stroke="#e04a50" strokeWidth="3.500" />
            </svg>
          </button>
        </div>
        <div className="mt-[39px] ml-[19px] flex flex-col" role="tablist" aria-label="Task pane">
          {taskTabs.map((tab) => (
            <button
              key={tab.label}
              type="button"
              role="tab"
              aria-label={tab.label}
              aria-selected={!!tab.active}
              className={`flex h-6 w-6 items-center justify-center border-b border-l border-[#1a1c1f] ${tab.active ? 'bg-[#e8eaee]' : 'border-t border-t-[#6d7075] bg-[#aaacb0]'}`}
            >
              {tab.icon}
            </button>
          ))}
        </div>
      </div>
    </main>
  );
}

/* ---------- Bottom bars ---------- */

function ModelTabs() {
  const steps = [
    { label: 'First', d: 'M4 2v8M11 2v8L6 6z' },
    { label: 'Previous', d: 'M10 2v8L5 6z' },
    { label: 'Next', d: 'M5 2v8l5-4z' },
    { label: 'Last', d: 'M11 2v8M4 2v8l5-4z' },
  ];
  return (
    <div className="flex h-[15px] items-stretch border-t border-[#1a1c1f] bg-[#e2e5ea]">
      <div className="flex w-[68px] shrink-0 bg-[#b7b9bd] pl-0.5">
        {steps.map((step) => (
          <button key={step.label} type="button" aria-label={step.label} className="flex w-4 items-center justify-center border-r border-[#909398]">
            <svg width="14" height="12" viewBox="0 0 14 12" aria-hidden="true">
              <path d={step.d} fill="#8b8e93" stroke="#8b8e93" />
            </svg>
          </button>
        ))}
      </div>
      <button type="button" className="w-14 border-x border-b border-[#1a1c1f] bg-[#e2e5ea] text-[11px] leading-3 font-bold">
        Model
      </button>
      <button type="button" className="mb-px w-[105px] border-r border-b border-[#1a1c1f] bg-[#aaacb0] pr-2 text-[11px] leading-3">
        Motion Study 1
      </button>
    </div>
  );
}

function StatusBar() {
  return (
    <footer className="flex h-[19px] items-center border-t border-[#1a1c1f] bg-[#d8dbe0] text-[11px]">
      <span className="flex-1 pl-0.5">Set the properties of the selected dimension(s).</span>
      <div className="flex w-[577px] shrink-0 items-center whitespace-nowrap">
        <span className="w-[67px]">7.53mm</span>
        <span className="w-[64px]">13.23mm</span>
        <span className="w-[50px]">0mm</span>
        <span className="w-[87px]">Fully Defined</span>
        <span className="w-[96px]">Editing Sketch3</span>
        <TrafficLight />
        <span className="ml-[34px] w-[55px]">MMGS</span>
        <button type="button" aria-label="Unit system">
          <svg width="6" height="4" viewBox="0 0 6 4" aria-hidden="true"><path d="M0 4h6L3 .5z" fill="#333" /></svg>
        </button>
        <button type="button" aria-label="Tags" className="mr-1.5 ml-auto">
          <Icon>
            <path d="M1 11L8 2l5-1 2 3-1 5-8 6z" fill="#fbc62a" stroke="#8b5b0a" />
            <path d="M5 10l5-5M7 12l5-5" stroke="#8b5b0a" strokeWidth=".8" />
            <circle cx="12.500" cy="3.500" r="1.200" fill="#fff" />
          </Icon>
        </button>
      </div>
    </footer>
  );
}

function Taskbar() {
  return (
    <div className="relative flex h-10 items-center overflow-hidden border-t border-[#12324f] bg-linear-to-r from-[#1a5c91] via-[#2e8ecb] via-35% to-[#1a4f92] text-white">
      <svg className="absolute inset-0 h-full w-full" viewBox="0 0 1366 40" preserveAspectRatio="none" fill="none" aria-hidden="true">
        <defs>
          <linearGradient id="tray" x1="0" x2="1">
            <stop offset="0" stopColor="#12386a" stopOpacity="0" />
            <stop offset=".15" stopColor="#12386a" stopOpacity=".9" />
            <stop offset="1" stopColor="#0e2f5c" />
          </linearGradient>
        </defs>
        <path d="M0 0h170l-70 40H0z" fill="#7fd0d8" opacity=".16" />
        <path d="M160 0l-46 40h20L175 0z" fill="#b9f0b0" opacity=".22" />
        <path d="M560 0c80 12 140 24 160 40H420z" fill="#6cc1ec" opacity=".12" />
        <path d="M890 0c30 8 56 24 76 40" stroke="#7fbdf2" strokeWidth="13" opacity=".3" />
        <path d="M890 0c30 8 56 24 76 40" stroke="#8fc4f5" strokeWidth="9" opacity=".4" />
        <path d="M890 0c30 8 56 24 76 40" stroke="#a8d4fa" strokeWidth="5" opacity=".6" />
        <path d="M1110 0h256v40h-256z" fill="url(#tray)" />
        <path d="M0 .500h1366" stroke="#8fc1e2" opacity=".6" />
      </svg>
      <div className="relative flex flex-1 items-center">
        <button type="button" aria-label="Start" className="ml-2 w-[37px]">
          <svg width="37" height="37" viewBox="0 0 37 37" aria-hidden="true">
            <defs>
              <radialGradient id="orb" cx=".5" cy=".85" r=".8">
                <stop offset="0" stopColor="#4fd8f5" />
                <stop offset=".45" stopColor="#1c6fa8" />
                <stop offset="1" stopColor="#0c2f55" />
              </radialGradient>
            </defs>
            <circle cx="18.500" cy="18.500" r="17.500" fill="url(#orb)" stroke="#9cc7dd" strokeWidth="1" />
            <path d="M3 16a16 14 0 0 1 31 0c-9 4-21 4-31 0z" fill="#fff" opacity=".3" />
            <path d="M10 9c3-2 6-2 9 0l-2.500 8.500c-3-2-6-2-9 0z" fill="#ee5a24" />
            <path d="M20.500 9.500c3 2 6.500 2 10 0L28 18c-3 2-6.500 2-10 0z" fill="#8fc63d" />
            <path d="M7 19.500c3-2 6-2 9 0L13.500 28c-3-2-6-2-9 0z" fill="#3a9be0" />
            <path d="M17.500 20c3 2 6.500 2 10 0L25 28.500c-3 2-6.500 2-10 0z" fill="#fbc11b" />
          </svg>
        </button>
        <button type="button" aria-label="Chrome" className="ml-[29px]">
          <svg width="30" height="30" viewBox="0 0 30 30" aria-hidden="true">
            <circle cx="15" cy="15" r="14.500" fill="#fbc72c" />
            <path d="M15 15L2.400 7.800A14.500 14.500 0 0 0 14.500 29.500L21 18z" fill="#2fa24f" />
            <path d="M2.400 7.800A14.500 14.500 0 0 1 27.600 7.800H15a7 7 0 0 0-6.500 10z" fill="#e33b2e" />
            <circle cx="15" cy="15" r="7" fill="#fff" />
            <circle cx="15" cy="15" r="5.500" fill="#4588f1" />
          </svg>
        </button>
        <button type="button" aria-label="Explorer" className="ml-[30px]">
          <svg width="34" height="32" viewBox="0 0 34 32" aria-hidden="true">
            <path d="M2 4h9l2 3h18v21H2z" fill="#e9c565" stroke="#a9823a" strokeWidth=".7" />
            <path d="M5 3h6v2H5z" fill="#36a83c" />
            <path d="M13 4h6v3h-6z" fill="#fff" />
            <path d="M14 4h3v2h-3z" fill="#d33" />
            <path d="M20 6h9v2h-9z" fill="#fff" />
            <path d="M22 6h4v1.500h-4z" fill="#2d7fd8" />
            <path d="M1 10h32l-1 18H2z" fill="#fbe9a3" stroke="#c9a552" strokeWidth=".7" />
            <path d="M6 30v-8c0-2 2-3 4-3h14c2 0 4 1 4 3v8h-5v-6H11v6z" fill="#a9d6ee" stroke="#5998bd" strokeWidth=".8" />
          </svg>
        </button>
        <button type="button" aria-label="Media Player" className="ml-[31px]">
          <svg width="28" height="28" viewBox="0 0 28 28" aria-hidden="true">
            <path d="M8 3h18v22H8z" fill="#7fb9dd" stroke="#3d7ba8" />
            <path d="M4 2h17v24H4z" fill="#a9d3ec" stroke="#4a88b5" />
            <circle cx="11" cy="14" r="9" fill="#f58220" stroke="#fbd0a0" />
            <path d="M8 9v10l8-5z" fill="#fff" />
          </svg>
        </button>
        <button type="button" aria-label="SolidWorks" className="ml-[18px] flex h-[38px] w-[59px] items-center justify-center rounded-[3px] border border-[#e6f2fa] bg-linear-to-br from-[#f4f9fd]/95 to-[#a9d0ea]/85">
          <svg width="32" height="32" viewBox="0 0 32 32" aria-hidden="true">
            <path d="M1 6l15-5 15 4-14 5z" fill="#f25a50" />
            <path d="M1 6l16 4v21L2 26z" fill="#d8150f" />
            <path d="M31 5L17 10v21l13-6z" fill="#a10d0a" />
            <text x="3" y="24" className="font-['Liberation_Sans',sans-serif] text-[16px] font-bold" fill="#fff">S</text>
            <text x="16" y="24" className="font-['Liberation_Sans',sans-serif] text-[14px] font-bold" fill="#fff">W</text>
          </svg>
        </button>
        <button type="button" aria-label="Paint" className="ml-[3px] flex h-[38px] w-[59px] items-center justify-center rounded-[3px] border border-[#a9d5ee]/70 bg-[#a5d3ee]/45">
          <svg width="32" height="32" viewBox="0 0 32 32" aria-hidden="true">
            <path d="M3 17C3 9 14 4 22 8s6 12 0 17-11 3-11-1-8 1-8-7z" fill="#e8f0f8" stroke="#7d97b0" />
            <circle cx="7.500" cy="17" r="2.600" fill="#dc3a30" />
            <circle cx="12" cy="11.500" r="2.600" fill="#3fae48" />
            <circle cx="18.500" cy="10" r="2.600" fill="#f5b023" />
            <circle cx="14" cy="20" r="2.600" fill="#3c8edb" />
            <path d="M26 6l-8 25-2-1 7-25z" fill="#e58a2c" stroke="#a3560f" strokeWidth=".6" />
            <path d="M24 8c-1-5 3-8 7-7 0 4-2 7-5 8z" fill="#b98049" />
          </svg>
        </button>
      </div>
      <div className="relative flex h-full shrink-0 items-center">
        <button type="button" aria-label="Show hidden icons" className="mr-3">
          <svg width="8" height="5" viewBox="0 0 8 5" aria-hidden="true"><path d="M0 5h8L4 0z" fill="#fff" /></svg>
        </button>
        <button type="button" aria-label="Action Center">
          <Icon>
            <path d="M2 1v15" stroke="#fff" strokeWidth="1.500" />
            <path d="M3 2c3-2 5 1 9-.500v8c-4 1.500-6-1-9 0z" fill="#fff" />
            <circle cx="11" cy="11.500" r="4.300" fill="#d4261c" stroke="#fff" strokeWidth=".6" />
            <path d="M9.300 9.800l3.400 3.400M12.700 9.800l-3.400 3.400" stroke="#fff" strokeWidth="1.300" />
          </Icon>
        </button>
        <button type="button" aria-label="Power" className="ml-2">
          <Icon>
            <path d="M10 15H2V3h2.500V1.500h3V3H9" stroke="#fff" strokeWidth="1.600" />
            <path d="M8.500 3v4M12.500 3v4" stroke="#fff" strokeWidth="1.400" />
            <path d="M6.500 6.500h8v2.500c0 1.500-1.500 2.500-3 2.500h-2c-1.500 0-3-1-3-2.500z" fill="#fff" />
            <path d="M10.500 11v5" stroke="#fff" strokeWidth="1.400" />
          </Icon>
        </button>
        <button type="button" aria-label="Network" className="ml-2.5">
          <Icon size={18} box={18}>
            <path d="M2 13v3M5 11v5M8 8v8M11 5v11M15 2v14" stroke="#6d83a3" strokeWidth="2" />
            <path d="M8 8l8 8M16 8l-8 8" stroke="#e01616" strokeWidth="2" />
          </Icon>
        </button>
        <div className="ml-2.5 flex w-[70px] flex-col text-center text-[11px] leading-[17px]">
          <span>11:39 PM</span>
          <span>2/16/2016</span>
        </div>
        <button type="button" aria-label="Show desktop" className="ml-1 h-full w-3 border border-[#6b8db0] bg-linear-to-b from-[#5b7ea3] to-[#173f6d]" />
      </div>
    </div>
  );
}

export default function App() {
  return (
    <div className="flex h-screen flex-col bg-[#c5c8d3] font-['Open_Sans','Noto_Sans',sans-serif] text-[#1a1c20]">
      <TitleBar />
      <Ribbon />
      <TabStrip />
      <div className="flex min-h-0 flex-1">
        <PropertyManager />
        <GraphicsArea />
      </div>
      <ModelTabs />
      <StatusBar />
      <Taskbar />
    </div>
  );
}
